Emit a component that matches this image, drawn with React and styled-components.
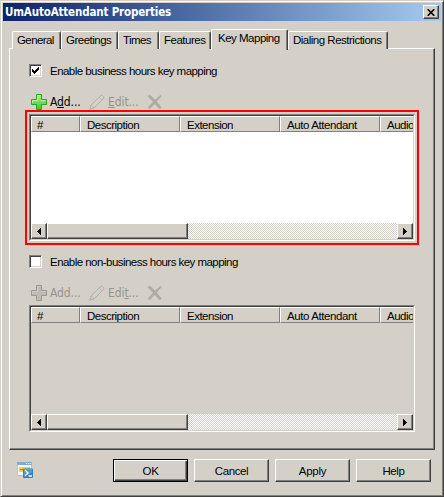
import React from "react";
import styled, { createGlobalStyle, css } from "styled-components";

const face = "#d4d0c8";

const GlobalStyle = createGlobalStyle`
  * { box-sizing: border-box; }
  body { margin: 0; background: ${face}; overflow: hidden; }
`;

const raised = css`
  border: 1px solid;
  border-color: #fff #404040 #404040 #fff;
  box-shadow: inset -1px -1px 0 #808080;
`;

const Dialog = styled.div`
  width: 444px;
  height: 497px;
  background: ${face};
  border: 1px solid;
  border-color: ${face} #404040 #404040 ${face};
  box-shadow: inset 1px 1px 0 #fff, inset -1px -1px 0 #808080;
  padding: 2px;
  display: flex;
  flex-direction: column;
  font: 11.5px/13px "Liberation Sans", Arial, sans-serif;
  color: #000;
  white-space: nowrap;
  cursor: default;
`;

const TitleBar = styled.header`
  height: 18px;
  flex: none;
  display: flex;
  align-items: center;
  justify-content: space-between;
  padding: 0 2px;
  background: linear-gradient(90deg, #0a246a, #a6caf0);
`;

const Title = styled.h1`
  margin: 0;
  color: #fff;
  font: bold 11.5px/16px "DejaVu Sans Condensed", "DejaVu Sans", sans-serif;
  font-stretch: condensed;
  letter-spacing: ${(p) => p.$tracking}px;
`;

const CloseButton = styled.button`
  ${raised}
  width: 16px;
  height: 14px;
  padding: 0;
  background: ${face};
  display: flex;
  align-items: center;
  justify-content: center;
`;

const Tabs = styled.nav`
  height: 28px;
  flex: none;
  padding: 0 0 0 9px;
  display: flex;
  align-items: flex-end;
`;

const Tab = styled.div`
  width: ${(p) => p.$width}px;
  height: ${(p) => (p.$active ? 21 : 18)}px;
  margin-bottom: ${(p) => (p.$active ? -1 : 0)}px;
  z-index: ${(p) => (p.$active ? 1 : 0)};
  padding: ${(p) => (p.$active ? "2px 0 0 6px" : "2px 0 0 4px")};
  background: ${face};
  border: 1px solid;
  border-color: #fff #404040 transparent #fff;
  border-bottom: 0;
  border-radius: 2px 2px 0 0;
  box-shadow: inset -1px 0 0 #808080;
  letter-spacing: ${(p) => p.$tracking ?? -0.5}px;
`;

const Page = styled.main`
  ${raised}
  width: 426px;
  height: 402px;
  flex: none;
  margin-left: 6px;
  margin-top: -1px;
  padding: 15px 0 0 15px;
`;

const CheckRow = styled.label`
  display: flex;
  align-items: center;
  gap: 8px;
  height: 13px;
  margin-left: 4px;
  line-height: 15px;
  letter-spacing: ${(p) => p.$tracking}px;
`;

const CheckBox = styled.span`
  width: 13px;
  height: 13px;
  background: #fff;
  border: 1px solid;
  border-color: #808080 #fff #fff #808080;
  box-shadow: inset 1px 1px 0 #404040, inset -1px -1px 0 ${face};
  display: flex;
  align-items: center;
  justify-content: center;
`;

const CheckText = styled.span`
  padding-top: 1px;
`;

const Toolbar = styled.div`
  display: grid;
  grid-template-columns: 58px 58px 20px;
  height: 16px;
  margin: ${(p) => p.$top}px 0 0 6px;
`;

const Tool = styled.div`
  display: flex;
  align-items: center;
  gap: 3px;
  color: ${(p) => (p.$disabled ? "#96938d" : "#000")};
  font: 12px/16px "DejaVu Sans Condensed", "DejaVu Sans", sans-serif;
  font-stretch: condensed;
  letter-spacing: -0.1px;

  svg { flex: none; }
`;

const Highlight = styled.section`
  width: 394px;
  height: 135px;
  border: 2px solid #f00;
  padding: 2px;
  margin-bottom: 10px;
`;

const PlainFrame = styled.section`
  padding: 4px;
  width: 394px;
`;

const ListView = styled.div`
  width: 386px;
  height: 127px;
  border: 1px solid;
  border-color: #808080 #fff #fff #808080;
  display: flex;
`;

const ListInner = styled.div`
  flex: 1;
  min-width: 0;
  border: 1px solid;
  border-color: #404040 ${face} ${face} #404040;
  background: ${(p) => (p.$disabled ? face : "#fff")};
  display: flex;
  flex-direction: column;
  justify-content: space-between;
  overflow: hidden;
`;

const Header = styled.div`
  display: grid;
  grid-template-columns: 49px 100px 100px 100px 100px;
  height: 16px;
`;

const HeaderCell = styled.div`
  background: ${face};
  border: 1px solid;
  border-color: #fff #808080 #808080 #fff;
  padding: 2px 0 0 6px;
  line-height: 13px;
  height: 16px;
  letter-spacing: ${(p) => p.$tracking || 0}px;

  &:first-child { padding-left: 5px; }
`;

const ScrollBar = styled.div`
  height: 16px;
  display: flex;
  background: repeating-conic-gradient(#fff 0 25%, ${face} 0 50%) 0 0 / 2px 2px;
`;

const ScrollPart = styled.div`
  ${raised}
  width: ${(p) => p.$width}px;
  background: ${face};
  display: flex;
  align-items: center;
  justify-content: center;
  margin-left: ${(p) => (p.$end ? "auto" : 0)};
`;

const Footer = styled.footer`
  display: flex;
  align-items: flex-start;
  gap: 6px;
  padding: 9px 0 0 14px;

  > svg { margin: 3px 74px 0 0; }
`;

const Button = styled.button`
  ${raised}
  width: 75px;
  height: 23px;
  padding: 1px 0 0;
  background: ${face};
  font: inherit;
  letter-spacing: ${(p) => p.$tracking ?? -0.4}px;
  color: #000;
  outline: ${(p) => (p.$primary ? "1px solid #000" : "none")};
  outline-offset: -1px;
  ${(p) => p.$primary && css`
    border-color: #000;
    box-shadow: inset 1px 1px 0 #fff, inset -1px -1px 0 #404040, inset -2px -2px 0 #808080;
  `}
`;

const PlusIcon = ({ disabled }) => (
  <svg width="16" height="16" viewBox="0 0 16 16">
    <defs>
      <linearGradient id="plus" x2="0" y2="1">
        <stop stopColor="#b5f08a" />
        <stop offset="1" stopColor="#32cb27" />
      </linearGradient>
    </defs>
    <path
      d="M5.5.5h5v5h5v5h-5v5h-5v-5h-5v-5h5z"
      fill={disabled ? "#bebbb4" : "url(#plus)"}
      stroke={disabled ? "#99968f" : "#27a51e"}
      strokeLinejoin="round"
    />
    <path d="M6.5 6.5v-5h3M1.5 9V6.5h5M10 6.5h4.5" fill="none" stroke={disabled ? "#d0cdc6" : "#d3f7b8"} opacity=".75" />
  </svg>
);

const PencilIcon = () => (
  <svg width="16" height="16" viewBox="0 0 16 16" fill="#d6d3cc" stroke="#a5a29b" strokeWidth=".8" strokeLinejoin="round">
    <path d="M.8 15.2 2.2 11 11.4 1.8q1-1 2-.2l.9.9q.9 1 0 2L5.1 13.8z" />
    <path d="m2.2 11 2.9 2.8M10.2 3 13 5.8" fill="none" strokeWidth=".6" />
  </svg>
);

const DeleteIcon = () => (
  <svg width="16" height="16" viewBox="0 0 16 16">
    <path d="M1 2.2 2.8 1 8 6l5.3-4.5 1 .5L9.3 7.5l4.9 6-1.6 1.3L7.8 9.5l-5.3 5.3-1.3-1.3 5.2-5.8z" fill="#aeaba4" stroke="#a6a39c" strokeWidth=".6" />
  </svg>
);

const Arrow = ({ right }) => (
  <svg width="4" height="7" viewBox="0 0 4 7" shapeRendering="crispEdges">
    <path d={right ? "M0 0v7l4-3.5z" : "M4 0v7L0 3.5z"} />
  </svg>
);

const ShellIcon = () => (
  <svg width="16" height="17" viewBox="0 0 16 17">
    <path d="M.5.5h14v13H.5z" fill="#f7fbff" stroke="#a5c7e2" />
    <path d="M0 0h15v3H0z" fill="#83abd0" />
    <path d="M9 1.5h1m1 0h1m1 0h1" stroke="#fff" />
    <path d="M2 5h11v5H2z" fill="#fbd51c" />
    <path d="M3 7.5h4" stroke="#a88a14" />
    <rect x="6" y="6.5" width="10" height="9.5" rx="1" fill="#2b82c1" />
    <path d="M7 7h8v4l-8 3z" fill="#65b1df" opacity=".6" />
    <path d="m8 8 3 3-3 3M11.5 14H15" fill="none" stroke="#fff" strokeWidth="1.3" />
  </svg>
);

const columns = [
  ["#", 0],
  ["Description", -0.5],
  ["Extension", -0.5],
  ["Auto Attendant", -0.4],
  ["Audio", -0.5],
];

const KeyList = ({ disabled }) => (
  <ListView>
    <ListInner $disabled={disabled}>
      <Header>
        {columns.map(([name, tracking]) => (
          <HeaderCell key={name} $tracking={tracking}>{name}</HeaderCell>
        ))}
      </Header>
      <ScrollBar>
        <ScrollPart $width={16}><Arrow /></ScrollPart>
        <ScrollPart $width={141} />
        <ScrollPart $width={16} $end><Arrow right /></ScrollPart>
      </ScrollBar>
    </ListInner>
  </ListView>
);

export default function App() {
  return (
    <>
      <GlobalStyle />
      <Dialog>
        <TitleBar>
          <Title $tracking={-0.16}>UmAutoAttendant Properties</Title>
          <CloseButton aria-label="Close">
            <svg width="8" height="7" viewBox="0 0 8 7">
              <path d="m.7.2 6.6 6.6M7.3.2.7 6.8" stroke="#000" strokeWidth="1.6" />
            </svg>
          </CloseButton>
        </TitleBar>
        <Tabs>
          <Tab $width={49} $tracking={-0.6}>General</Tab>
          <Tab $width={57}>Greetings</Tab>
          <Tab $width={41} $tracking={-0.6}>Times</Tab>
          <Tab $width={52}>Features</Tab>
          <Tab $width={77} $active>Key Mapping</Tab>
          <Tab $width={100}>Dialing Restrictions</Tab>
        </Tabs>
        <Page>
          <CheckRow $tracking={-0.54}>
            <CheckBox>
              <svg width="7" height="7" viewBox="0 0 7 7" shapeRendering="crispEdges">
                <path d="M0 2v3l2 2 5-5V-1L2 4z" />
              </svg>
            </CheckBox>
            <CheckText>Enable business hours key mapping</CheckText>
          </CheckRow>
          <Toolbar $top={17}>
            <Tool><PlusIcon /><span>A<u>d</u>d...</span></Tool>
            <Tool $disabled><PencilIcon /><span><u>E</u>dit...</span></Tool>
            <Tool $disabled><DeleteIcon /></Tool>
          </Toolbar>
          <Highlight><KeyList /></Highlight>
          <CheckRow $tracking={-0.54}>
            <CheckBox />
            <CheckText>Enable non-business hours key mapping</CheckText>
          </CheckRow>
          <Toolbar $top={17}>
            <Tool $disabled><PlusIcon disabled /><span>Add...</span></Tool>
            <Tool $disabled><PencilIcon /><span>Edi<u>t</u>...</span></Tool>
            <Tool $disabled><DeleteIcon /></Tool>
          </Toolbar>
          <PlainFrame><KeyList disabled /></PlainFrame>
        </Page>
        <Footer>
          <ShellIcon />
          <Button $primary $tracking={-0.2}>OK</Button>
          <Button>Cancel</Button>
          <Button $tracking={-0.3}>Apply</Button>
          <Button>Help</Button>
        </Footer>
      </Dialog>
    </>
  );
}
